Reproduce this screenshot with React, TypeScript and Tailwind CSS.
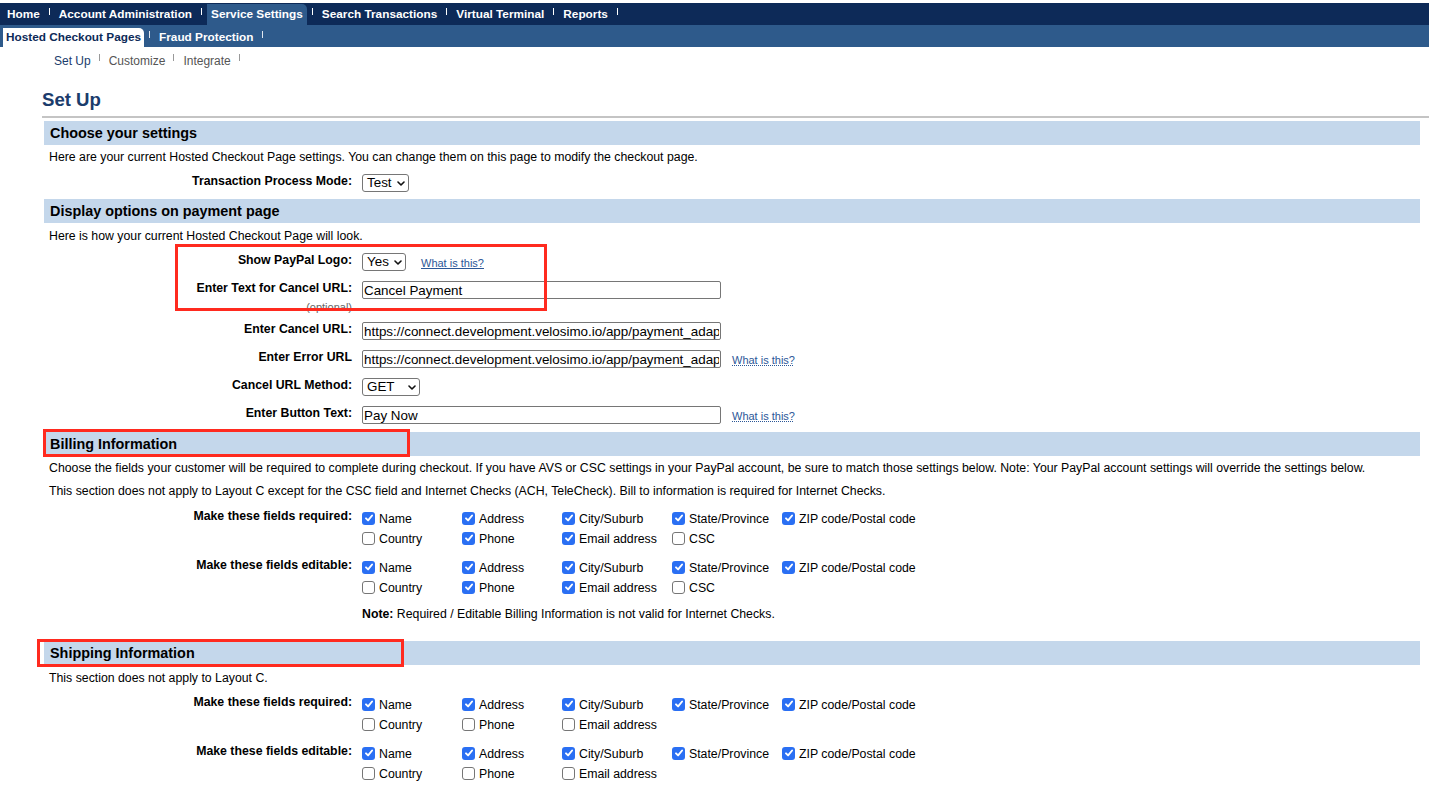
import React from "react";

type Item = [string, boolean];

const colW = ["w-[100px]", "w-[100px]", "w-[110px]", "w-[110px]", "w-auto"];

function Box({ checked }: { checked: boolean }) {
  if (checked) {
    return (
      <span className="flex h-[13px] w-[13px] shrink-0 items-center justify-center rounded-[3px] bg-[#2a6ff3]">
        <svg viewBox="0 0 10 10" className="h-[10px] w-[10px]">
          <path
            d="M2 5.3 L4.1 7.4 L8.1 2.5"
            stroke="white"
            strokeWidth="1.9"
            fill="none"
            strokeLinecap="round"
            strokeLinejoin="round"
          />
        </svg>
      </span>
    );
  }
  return <span className="h-[13px] w-[13px] shrink-0 rounded-[3px] border border-[#767676] bg-white" />;
}

function Chevron() {
  return (
    <svg viewBox="0 0 8 5" className="h-[5px] w-[8px]">
      <path d="M1 1 L4 4 L7 1" stroke="#111" strokeWidth="1.6" fill="none" strokeLinecap="round" strokeLinejoin="round" />
    </svg>
  );
}

function Sel({ v, w }: { v: string; w: string }) {
  return (
    <div
      className={`flex h-[18px] ${w} items-center justify-between rounded-[3px] border border-[#767676] bg-white pl-[4px] pr-[3px] text-[13.4px] leading-[16px]`}
    >
      <span>{v}</span>
      <Chevron />
    </div>
  );
}

function TextIn({ v }: { v: string }) {
  return (
    <input
      readOnly
      value={v}
      className="h-[18px] w-[359px] rounded-[2px] border border-[#767676] bg-white px-[1px] text-[13.4px] leading-[16px] text-black outline-none"
    />
  );
}

function Link({ ml, dotted }: { ml: string; dotted?: boolean }) {
  return (
    <span
      className={`${ml} mt-[4px] text-[11px] leading-[13px] text-[#2b5797] underline ${dotted ? "decoration-dotted" : ""}`}
    >
      What is this?
    </span>
  );
}

function Row({ label, h, children, optional }: { label: string; h: string; children: React.ReactNode; optional?: boolean }) {
  return (
    <div className={`flex ${h} pt-[5px]`}>
      <div className="w-[308px] text-right">
        <div className="font-bold leading-[14px]">{label}</div>
        {optional && <div className="mt-[6px] text-[11px] leading-[12px] text-[#666]">(optional)</div>}
      </div>
      <div className="ml-[10px] flex items-start">{children}</div>
    </div>
  );
}

function Header({ title, children }: { title: string; children?: React.ReactNode }) {
  return (
    <div className="relative h-[24px] bg-[#c4d7eb] pl-[6px] text-[14.4px] font-bold leading-[24px]">
      {title}
      {children}
    </div>
  );
}

function CheckGroup({ label, rows, cls }: { label: string; rows: Item[][]; cls?: string }) {
  return (
    <div className={`flex ${cls ?? ""}`}>
      <div className="w-[308px] pt-[1px] text-right font-bold leading-[14px]">{label}</div>
      <div className="ml-[10px] flex flex-col">
        {rows.map((row, i) => (
          <div key={i} className="flex h-[20px] items-center">
            {row.map(([t, c], j) => (
              <div key={j} className={`flex items-center ${colW[j]}`}>
                <Box checked={c} />
                <span className="ml-[4px] mt-[1px] leading-[14px]">{t}</span>
              </div>
            ))}
          </div>
        ))}
      </div>
    </div>
  );
}

const billing: Item[][] = [
  [
    ["Name", true],
    ["Address", true],
    ["City/Suburb", true],
    ["State/Province", true],
    ["ZIP code/Postal code", true],
  ],
  [
    ["Country", false],
    ["Phone", true],
    ["Email address", true],
    ["CSC", false],
  ],
];

const shipping: Item[][] = [
  [
    ["Name", true],
    ["Address", true],
    ["City/Suburb", true],
    ["State/Province", true],
    ["ZIP code/Postal code", true],
  ],
  [
    ["Country", false],
    ["Phone", false],
    ["Email address", false],
  ],
];

function TopSep() {
  return <span className="mx-[5px] mt-[4px] h-[7px] w-px bg-white" />;
}

export default function App() {
  return (
    <div className="h-[790px] overflow-hidden bg-white pt-[3px] font-['Liberation_Sans',Arial,sans-serif] text-[12.3px] text-black">
      {/* top nav */}
      <div className="flex h-[22px] bg-[#0d2a58] pl-[3px] pt-[1px] text-[11.8px] font-bold text-white">
        <span className="px-1 pb-px leading-[20px]">Home</span>
        <TopSep />
        <span className="px-1 pb-px leading-[20px]">Account Administration</span>
        <TopSep />
        <span className="rounded-tr-[5px] bg-[#2e5a8b] px-1 pb-px leading-[20px]">Service Settings</span>
        <TopSep />
        <span className="px-1 pb-px leading-[20px]">Search Transactions</span>
        <TopSep />
        <span className="px-1 pb-px leading-[20px]">Virtual Terminal</span>
        <TopSep />
        <span className="px-1 pb-px leading-[20px]">Reports</span>
        <TopSep />
      </div>
      {/* second nav */}
      <div className="flex h-[22px] bg-[#2e5a8b] pl-[3px] pt-[3px] text-[11.8px] font-bold text-white">
        <span className="rounded-tr-[5px] bg-white px-[3px] leading-[19px] text-[#0d2a58]">Hosted Checkout Pages</span>
        <span className="mx-[5px] mt-[3px] h-[7px] w-px bg-[#e0e6ee]" />
        <span className="px-1 leading-[19px]">Fraud Protection</span>
        <span className="mx-[5px] mt-[3px] h-[7px] w-px bg-[#e0e6ee]" />
      </div>
      {/* subnav */}
      <div className="flex h-[28px] pl-[50px] pt-[7px] text-[12px]">
        <span className="px-1 leading-[14px] text-[#1b3c6c]">Set Up</span>
        <span className="mx-[4px] h-[7px] w-px bg-[#999]" />
        <span className="px-1 pl-[5px] leading-[14px] text-[#555]">Customize</span>
        <span className="mx-[4px] h-[7px] w-px bg-[#999]" />
        <span className="px-1 pl-[5px] leading-[14px] text-[#555]">Integrate</span>
        <span className="mx-[4px] h-[7px] w-px bg-[#999]" />
      </div>

      <div className="pl-[42px]">
        <h1 className="mt-[14px] text-[18.6px] font-bold leading-[22px] text-[#1b3c6c]">Set Up</h1>
        <div className="mt-[5px] h-[2px] bg-[#c4c4c4]" />

        <div className="ml-[2px] mr-[9px] mt-[3px]">
          {/* Choose your settings */}
          <Header title="Choose your settings" />
          <div className="flex h-[24px] items-center pl-[5px] pt-px">
            Here are your current Hosted Checkout Page settings. You can change them on this page to modify the checkout page.
          </div>
          <Row label="Transaction Process Mode:" h="h-[28px]">
            <Sel v="Test" w="w-[47px]" />
          </Row>

          {/* Display options */}
          <div className="relative mt-[2px]">
            <Header title="Display options on payment page" />
            <div className="flex h-[25px] items-center pl-[5px] pt-px">Here is how your current Hosted Checkout Page will look.</div>
            <Row label="Show PayPal Logo:" h="h-[28px]">
              <Sel v="Yes" w="w-[44px]" />
              <Link ml="ml-[15px]" />
            </Row>
            <Row label="Enter Text for Cancel URL:" h="h-[41px]" optional>
              <TextIn v="Cancel Payment" />
            </Row>
            <Row label="Enter Cancel URL:" h="h-[28px]">
              <TextIn v="https://connect.development.velosimo.io/app/payment_adapter/cancel" />
            </Row>
            <Row label="Enter Error URL" h="h-[28px]">
              <TextIn v="https://connect.development.velosimo.io/app/payment_adapter/error" />
              <Link ml="ml-[11px]" dotted />
            </Row>
            <Row label="Cancel URL Method:" h="h-[28px]">
              <Sel v="GET" w="w-[58px]" />
            </Row>
            <Row label="Enter Button Text:" h="h-[28px]">
              <TextIn v="Pay Now" />
              <Link ml="ml-[11px]" dotted />
            </Row>
            <div className="pointer-events-none absolute left-[131px] top-[45px] h-[67px] w-[372px] border-[3px] border-[#ff2a1f]" />
          </div>

          {/* Billing */}
          <div className="mt-[3px]">
            <Header title="Billing Information">
              <div className="pointer-events-none absolute -left-[1px] -top-[3px] h-[28px] w-[367px] border-[3px] border-[#ff2a1f]" />
            </Header>
            <div className="flex h-[24px] items-center pl-[5px]">
              Choose the fields your customer will be required to complete during checkout. If you have AVS or CSC settings in your PayPal account, be sure to match those settings below. Note: Your PayPal account settings will override the settings below.
            </div>
            <div className="flex h-[23px] items-center pl-[5px]">
              This section does not apply to Layout C except for the CSC field and Internet Checks (ACH, TeleCheck). Bill to information is required for Internet Checks.
            </div>
            <CheckGroup label="Make these fields required:" rows={billing} cls="mt-[5px]" />
            <CheckGroup label="Make these fields editable:" rows={billing} cls="mt-[9px]" />
            <div className="mt-[7px] flex h-[20px] items-center pl-[318px]">
              <span className="font-bold">Note:</span>
              <span>&nbsp;Required / Editable Billing Information is not valid for Internet Checks.</span>
            </div>
          </div>

          {/* Shipping */}
          <div className="mt-[17px]">
            <Header title="Shipping Information">
              <div className="pointer-events-none absolute -left-[7px] -top-[2px] h-[28px] w-[367px] border-[3px] border-[#ff2a1f]" />
            </Header>
            <div className="flex h-[25px] items-center pl-[5px] pt-px">This section does not apply to Layout C.</div>
            <CheckGroup label="Make these fields required:" rows={shipping} cls="mt-[4px]" />
            <CheckGroup label="Make these fields editable:" rows={shipping} cls="mt-[9px]" />
          </div>
        </div>
      </div>
    </div>
  );
}
